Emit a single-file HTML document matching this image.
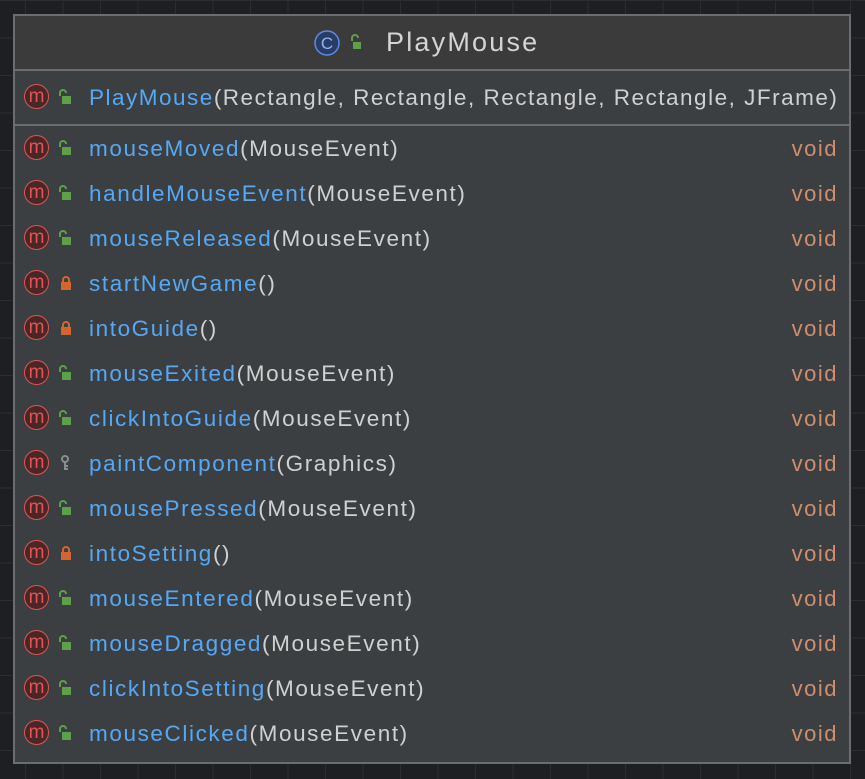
<!DOCTYPE html>
<html><head><style>
body{margin:0;width:865px;height:779px;background:#1e1f22;overflow:hidden;position:relative;font-family:"Liberation Sans",sans-serif;
background-image:linear-gradient(to right,#2b2d30 1px,transparent 1px),linear-gradient(to bottom,#2b2d30 1px,transparent 1px);
background-size:37.5px 37.5px;background-position:25px 0px;}
.box{position:absolute;left:13px;top:14px;width:834px;height:746px;border:2px solid #6b6d70;background:#3c3f41;}
.hdr{height:53px;background:#3b3b3b;border-bottom:2px solid #6b6d70;position:relative;}
.hdr .t{position:absolute;left:371px;top:11px;font-size:27px;color:#d4d4d4;letter-spacing:2.2px}
.row{position:relative;height:45px;}
.ctor{height:53px;border-bottom:2px solid #6b6d70;}
.m{position:absolute;left:9px;top:9px;width:25px;height:25px;border-radius:50%;border:1.5px solid #e05555;background:#4a2626;color:#e05555;font-size:19px;line-height:24px;text-align:center;box-sizing:border-box;}
.ctor .m{top:13px}
.n{position:absolute;left:74px;top:10px;font-size:22.5px;color:#d0d0d0;white-space:nowrap;letter-spacing:1.6px}
.ctor .n{top:14px;letter-spacing:1.5px}
.n b{font-weight:normal;color:#56a8f5}
.v{position:absolute;right:11px;top:10px;font-size:22px;color:#cf8e6d;letter-spacing:1.5px}
.lk{position:absolute;left:43px;top:14px}
.ctor .lk{top:18px}
</style></head><body>
<div class="box">
<div class="hdr">
<svg style="position:absolute;left:299px;top:13px" width="50" height="28"><circle cx="13" cy="14" r="12" fill="#2a3c66" stroke="#5a8be6" stroke-width="1.5"/><text x="13" y="20" text-anchor="middle" font-size="17" fill="#8fb4f2" font-family="Liberation Sans">C</text><path d="M38 12v-3a3 3 0 0 1 6 0" stroke="#5e9f4a" stroke-width="2" fill="none"/><rect x="39" y="13" width="8" height="7" fill="#5e9f4a"/></svg>
<div class="t">PlayMouse</div></div>
<div class="row ctor"><div class="m">m</div><svg class="lk" width="16" height="16"><path d="M2 7v-3a3 3 0 0 1 6 0" stroke="#5e9f4a" stroke-width="2" fill="none"/><rect x="4" y="7" width="9" height="8" fill="#5e9f4a"/></svg><div class="n"><b>PlayMouse</b>(Rectangle, Rectangle, Rectangle, Rectangle, JFrame)</div></div>
<div id="rows"></div>
</div>
<script>
var d=[["mouseMoved","MouseEvent","p"],["handleMouseEvent","MouseEvent","p"],["mouseReleased","MouseEvent","p"],["startNewGame","","x"],["intoGuide","","x"],["mouseExited","MouseEvent","p"],["clickIntoGuide","MouseEvent","p"],["paintComponent","Graphics","k"],["mousePressed","MouseEvent","p"],["intoSetting","","x"],["mouseEntered","MouseEvent","p"],["mouseDragged","MouseEvent","p"],["clickIntoSetting","MouseEvent","p"],["mouseClicked","MouseEvent","p"]];
var h="";d.forEach(function(r){var ic;
if(r[2]=="p")ic='<path d="M2 7v-3a3 3 0 0 1 6 0" stroke="#5e9f4a" stroke-width="2" fill="none"/><rect x="4" y="7" width="9" height="8" fill="#5e9f4a"/>';
else if(r[2]=="x")ic='<path d="M5 7v-2a3 3 0 0 1 6 0v2" stroke="#d4652f" stroke-width="2" fill="none"/><rect x="3" y="7" width="10" height="8" fill="#d4652f"/>';
else ic='<circle cx="7" cy="4" r="3" fill="none" stroke="#8a8d90" stroke-width="2"/><path d="M7 7v8M7 11h3M7 14h3" stroke="#8a8d90" stroke-width="2"/>';
h+='<div class="row"><div class="m">m</div><svg class="lk" width="16" height="16">'+ic+'</svg><div class="n"><b>'+r[0]+'</b>('+r[1]+')</div><div class="v">void</div></div>';});
document.getElementById("rows").innerHTML=h;
</script>
</body></html>
